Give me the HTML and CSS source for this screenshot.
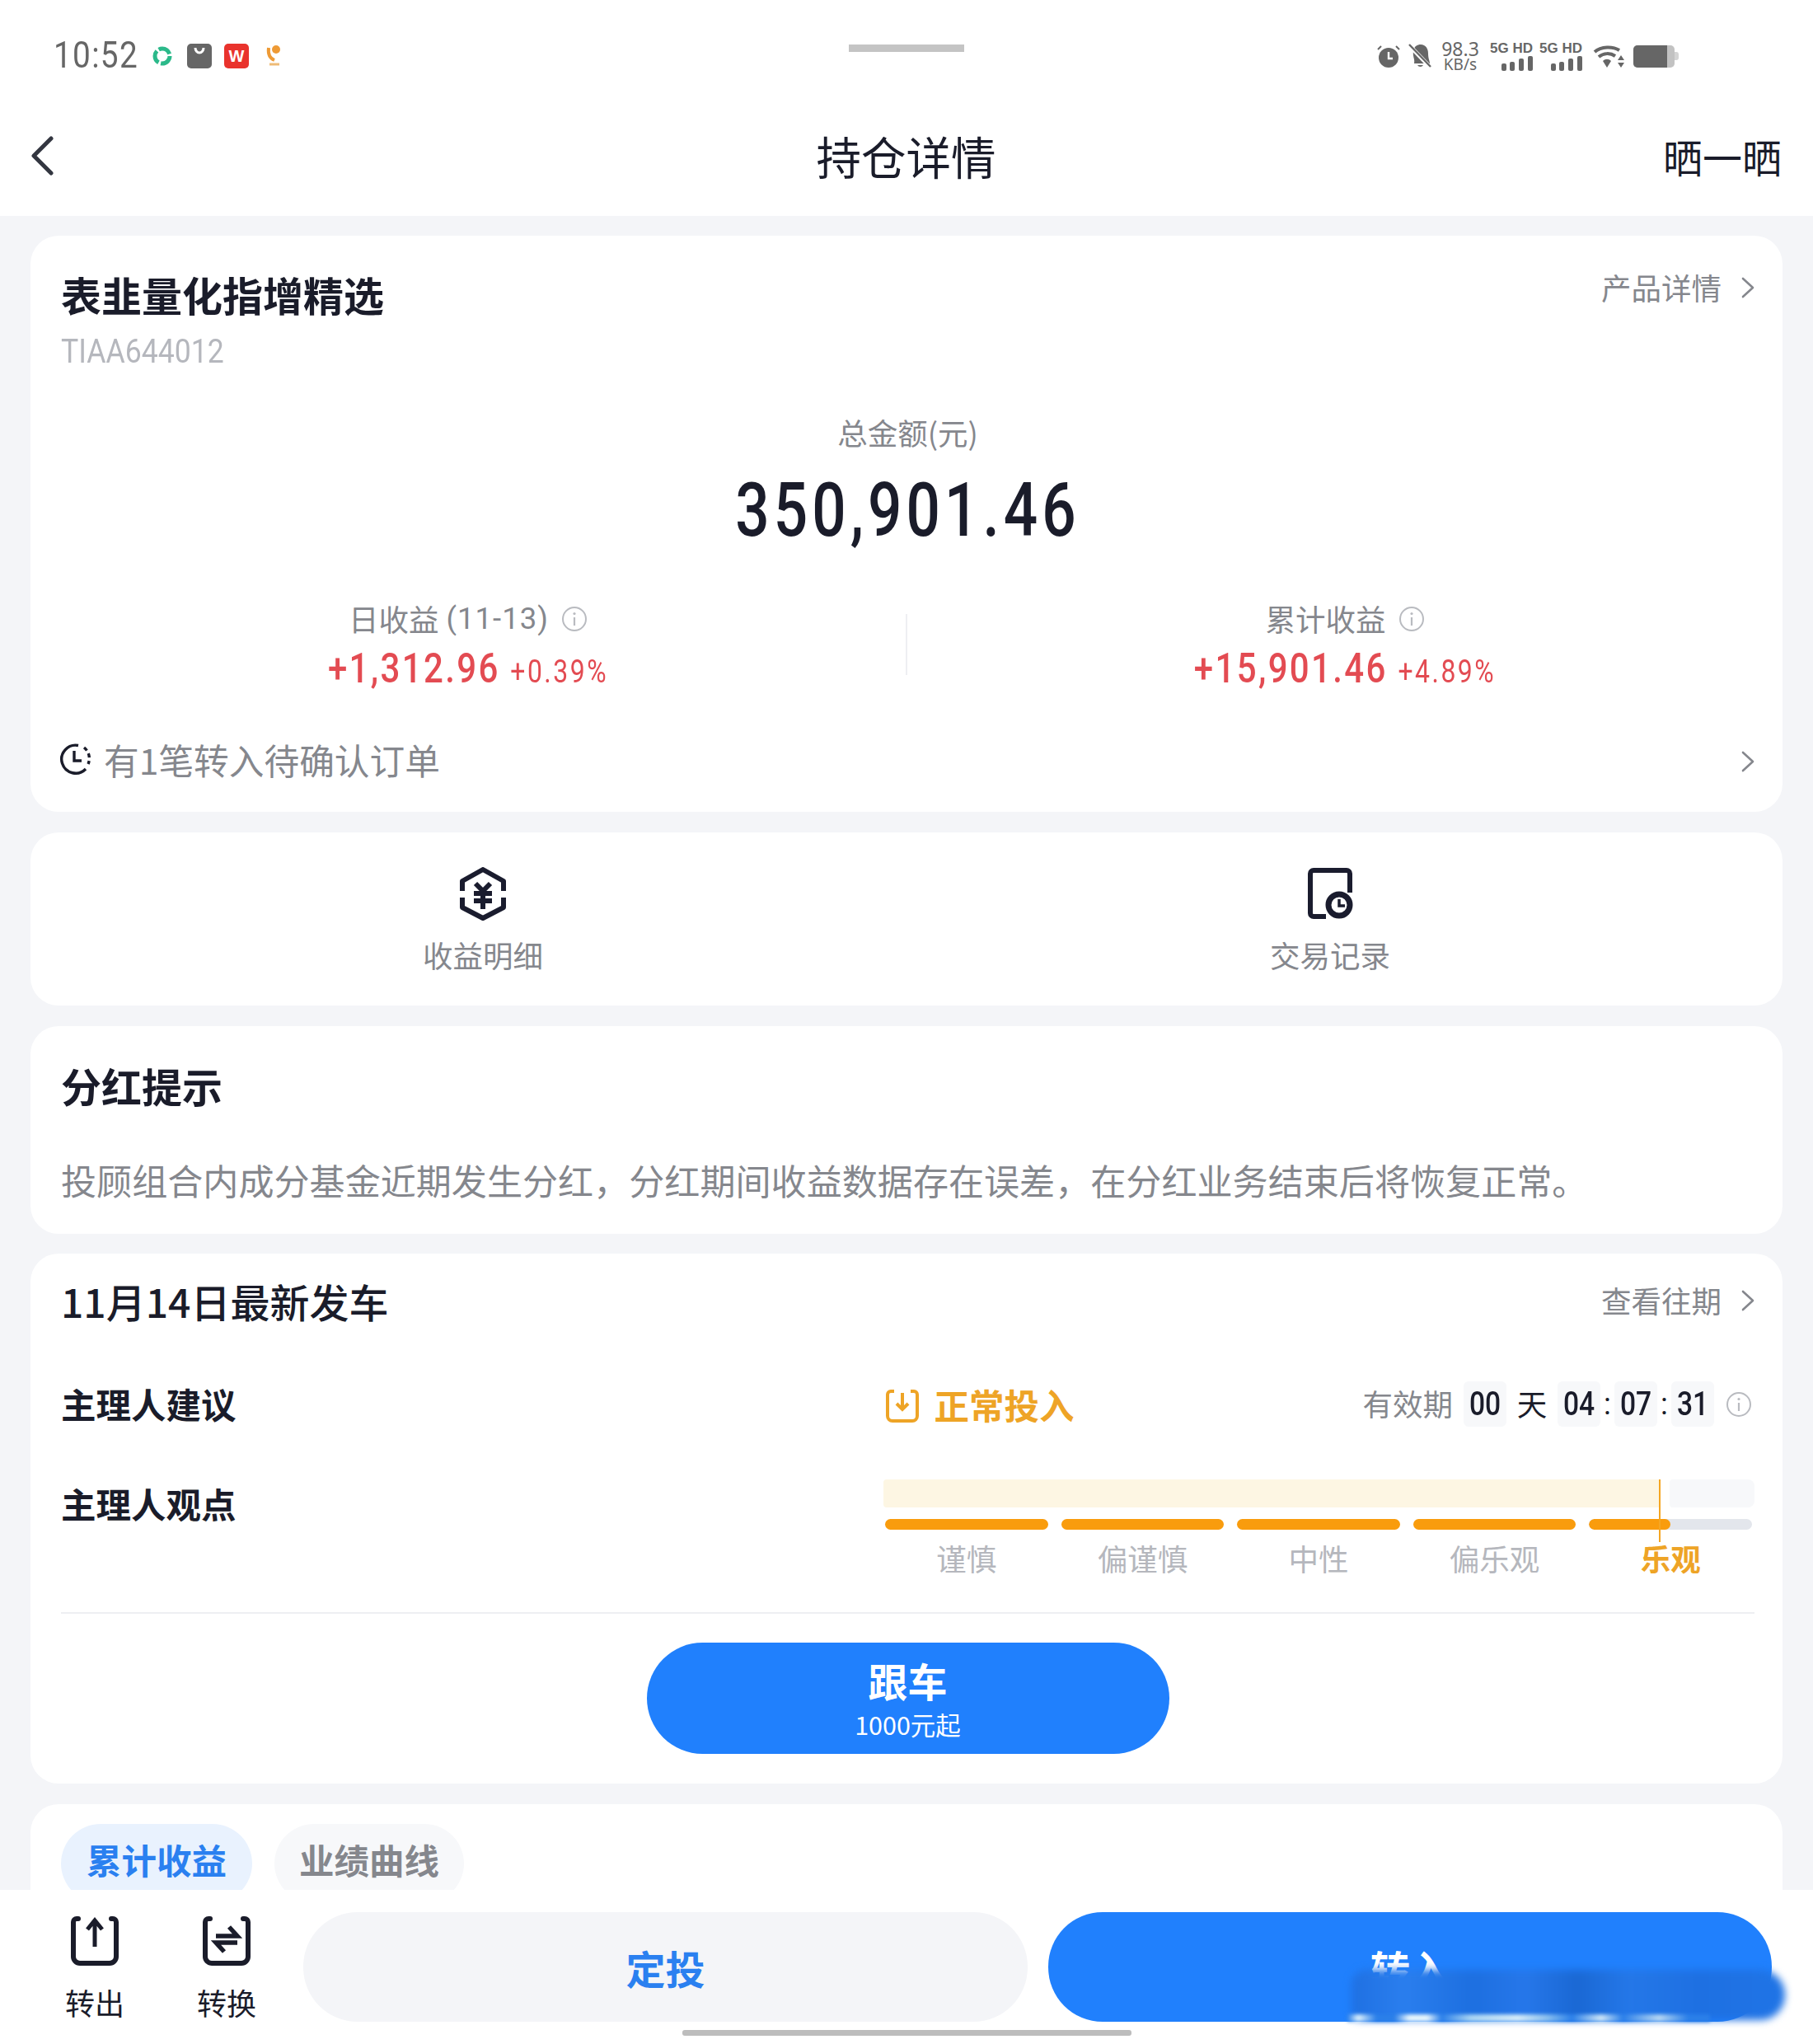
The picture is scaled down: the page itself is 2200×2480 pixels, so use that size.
FILE: index.html
```html
<!DOCTYPE html>
<html lang="zh-CN">
<head>
    <meta charset="UTF-8">
    <meta name="viewport" content="width=device-width, initial-scale=1.0">
    <title>持仓详情</title>
    <link rel="stylesheet" href="styles.css">
</head>
<body>
    <svg class="defs" width="0" height="0">
        <symbol id="chev" viewBox="0 0 18 26"><path d="M3 2L15 13L3 24" fill="none" stroke="#85878d" stroke-width="2.6" stroke-linecap="round" stroke-linejoin="round"/></symbol>
        <symbol id="info" viewBox="0 0 32 32"><circle cx="16" cy="16" r="14" fill="none" stroke="#b9bbc0" stroke-width="2"/><circle cx="16" cy="9.5" r="1.6" fill="#b9bbc0"/><path d="M16 14V24" stroke="#b9bbc0" stroke-width="2.2"/></symbol>
    </svg>

    <div id="app">
        <!-- Statusrad -->
        <div class="status">
            <div class="status-left">
                <span class="time">10:52</span>
                <svg class="ic-ring" width="24" height="24" viewBox="0 0 24 24"><circle cx="12" cy="12" r="9" fill="none" stroke="#2bb98a" stroke-width="5" stroke-dasharray="16 2.800"/></svg>
                <span class="app-ic app-dark"><svg width="30" height="30" viewBox="0 0 30 30"><path d="M10 5a5 6 0 0 0 10 0" fill="none" stroke="#fff" stroke-width="3"/></svg></span>
                <span class="app-ic app-red">W</span>
                <svg class="ic-phone" width="27" height="30" viewBox="0 0 27 30"><circle cx="16" cy="7" r="5" fill="#ee9a35"/><path d="M7 5C6 13 9 18 14 20" fill="none" stroke="#ee9a35" stroke-width="4"/><path d="M8 25h12" stroke="#eebb77" stroke-width="3"/></svg>
            </div>
            <div class="handle"></div>
            <div class="status-right">
                <svg width="28" height="28" viewBox="0 0 28 28"><circle cx="14" cy="16" r="12" fill="#666"/><path d="M14 9v8h5" fill="none" stroke="#fff" stroke-width="2.4"/><path d="M1 6L5 2M27 6L23 2" stroke="#666" stroke-width="2"/></svg>
                <svg class="ic-bell" width="28" height="30" viewBox="0 0 28 30"><path d="M7 24C8 18 5 16 6 9C7 3 11 1 15 1C21 1 24 6 24 12C24 18 26 21 26 24Z" fill="#666"/><path d="M11 26a4 4 0 0 0 7 0Z" fill="#666"/><path d="M1 2L27 29" stroke="#fff" stroke-width="5"/><path d="M1 1L27 28" stroke="#666" stroke-width="2.4"/></svg>
                <div class="speed"><span class="speed-num">98.3</span><span class="speed-unit">KB/s</span></div>
                <div class="sim">
                    <span>5G HD</span>
                    <svg width="38" height="18" viewBox="0 0 38 18"><rect x="0" y="9" width="6" height="9" rx="2"/><rect x="10" y="7" width="6" height="11" rx="2"/><rect x="21" y="3" width="6" height="15" rx="2"/><rect x="32" y="0" width="6" height="18" rx="2"/></svg>
                </div>
                <div class="sim">
                    <span>5G HD</span>
                    <svg width="38" height="18" viewBox="0 0 38 18"><rect x="0" y="9" width="6" height="9" rx="2"/><rect x="10" y="7" width="6" height="11" rx="2"/><rect x="21" y="3" width="6" height="15" rx="2"/><rect x="32" y="0" width="6" height="18" rx="2"/></svg>
                </div>
                <svg class="ic-wifi" width="38" height="30" viewBox="0 0 38 30"><path d="M2 10C10 3 24 3 32 8M7 16C13 11 21 11 27 15" fill="none" stroke="#666" stroke-width="4"/><path d="M12 21C15 18 19 18 22 21L17 29Z" fill="#666"/><path d="M34 14l4 6h-8zM30 23h8l-4 6z" fill="#666"/></svg>
                <div class="battery"><span class="battery-fill"></span></div>
                <span class="battery-nub"></span>
            </div>
        </div>

        <!-- Navigering -->
        <div class="nav">
            <svg class="nav-back" width="28" height="48" viewBox="0 0 28 48"><path d="M25 3L4 24L25 45" fill="none" stroke="#333640" stroke-width="5" stroke-linecap="round" stroke-linejoin="round"/></svg>
            <div class="nav-title">持仓详情</div>
            <div class="nav-share">晒一晒</div>
        </div>

        <div class="main">
            <!-- Översikt -->
            <section class="card card-total">
                <div class="head-row">
                    <h2 class="title">表韭量化指增精选</h2>
                    <a class="more">产品详情<svg class="chev" width="18" height="26"><use href="#chev"/></svg></a>
                </div>
                <div class="code">TIAA644012</div>
                <div class="total-label">总金额(元)</div>
                <div class="total-value">350,901.46</div>
                <div class="stats">
                    <div class="stat">
                        <div class="stat-label">日收益 <span class="num">(11-13)</span><svg class="info" width="32" height="32"><use href="#info"/></svg></div>
                        <div class="stat-value"><span class="gain">+1,312.96</span><span class="rate">+0.39%</span></div>
                    </div>
                    <div class="stat-line"></div>
                    <div class="stat">
                        <div class="stat-label">累计收益<svg class="info" width="32" height="32"><use href="#info"/></svg></div>
                        <div class="stat-value"><span class="gain">+15,901.46</span><span class="rate">+4.89%</span></div>
                    </div>
                </div>
                <div class="pending">
                    <svg class="pending-ic" width="40" height="38" viewBox="0 0 40 38"><path d="M24 2.500A17 17 0 1 0 33 31" fill="none" stroke="#1a1c2a" stroke-width="3.400"/><path d="M31 5a17 17 0 0 1 5 20" fill="none" stroke="#1a1c2a" stroke-width="3.400" stroke-dasharray="5 4"/><path d="M19 9V21H28" fill="none" stroke="#1a1c2a" stroke-width="3.400"/></svg>
                    <span class="pending-text">有1笔转入待确认订单</span>
                    <svg class="chev" width="18" height="26"><use href="#chev"/></svg>
                </div>
            </section>

            <!-- Genvägar -->
            <section class="card card-links">
                <div class="link">
                    <svg width="58" height="65" viewBox="0 0 58 65"><path d="M4 29V17L29 3L54 17V29M54 37V49L29 62L4 49V37" fill="none" stroke="#1a1c2e" stroke-width="6" stroke-linejoin="round"/><path d="M20 20L29 29L38 20M18 32H40M18 41H40M29 29V51" fill="none" stroke="#1a1c2e" stroke-width="6"/></svg>
                    <span class="link-text">收益明细</span>
                </div>
                <div class="link">
                    <svg width="56" height="63" viewBox="0 0 56 63"><path d="M23 59H8A4 4 0 0 1 4 55V7A4 4 0 0 1 8 3H48A4 4 0 0 1 52 7V30" fill="none" stroke="#1a1c2e" stroke-width="6"/><circle cx="39" cy="45" r="13" fill="none" stroke="#1a1c2e" stroke-width="7"/><path d="M39 38V46H46" fill="none" stroke="#1a1c2e" stroke-width="3.500"/></svg>
                    <span class="link-text">交易记录</span>
                </div>
            </section>

            <!-- Utdelning -->
            <section class="card card-notice">
                <h2 class="title">分红提示</h2>
                <p class="notice-text">投顾组合内成分基金近期发生分红，分红期间收益数据存在误差，在分红业务结束后将恢复正常。</p>
            </section>

            <!-- Senaste signal -->
            <section class="card card-signal">
                <div class="head-row signal-head">
                    <h3 class="signal-title">11月14日最新发车</h3>
                    <a class="more">查看往期<svg class="chev" width="18" height="26"><use href="#chev"/></svg></a>
                </div>
                <div class="signal-row">
                    <div class="row-label">主理人建议</div>
                    <div class="row-body advice">
                        <svg width="42" height="42" viewBox="0 0 42 42"><path d="M11 3H7A4 4 0 0 0 3 7V33A6 6 0 0 0 9 39H33A6 6 0 0 0 39 33V7A4 4 0 0 0 35 3H31" fill="none" stroke="#eea426" stroke-width="4"/><path d="M21 5V24M14 18L21 25L28 18" fill="none" stroke="#eea426" stroke-width="4"/></svg>
                        <span class="advice-text">正常投入</span>
                        <div class="validity">
                            <span class="validity-label">有效期</span>
                            <span class="digit digit-first"><i>00</i></span>
                            <span class="day">天</span>
                            <span class="digit"><i>04</i></span><span class="colon">:</span><span class="digit"><i>07</i></span><span class="colon">:</span><span class="digit"><i>31</i></span>
                            <svg class="info" width="32" height="32"><use href="#info"/></svg>
                        </div>
                    </div>
                </div>
                <div class="signal-row view-row">
                    <div class="row-label view-label">主理人观点</div>
                    <div class="row-body gauge">
                        <div class="gauge-bg"><span class="bg-on"></span><span class="bg-off"></span></div>
                        <div class="gauge-bars">
                            <span class="seg"></span><span class="seg"></span><span class="seg"></span><span class="seg"></span>
                            <span class="seg seg-part"><i></i></span>
                        </div>
                        <div class="gauge-labels">
                            <span>谨慎</span><span>偏谨慎</span><span>中性</span><span>偏乐观</span><span class="on">乐观</span>
                        </div>
                        <span class="gauge-mark"></span>
                    </div>
                </div>
                <div class="signal-line"></div>
                <div class="follow">
                    <strong>跟车</strong>
                    <span>1000元起</span>
                </div>
            </section>

            <!-- Flikar -->
            <section class="card card-tabs">
                <span class="tab tab-on">累计收益</span>
                <span class="tab">业绩曲线</span>
            </section>
        </div>

        <!-- Nedre knappar -->
        <div class="bottom">
            <div class="bottom-row">
                <div class="tool">
                    <svg width="60" height="61" viewBox="0 0 60 61"><path d="M10 4H8A4 4 0 0 0 4 8V50A8 8 0 0 0 12 58H48A8 8 0 0 0 56 50V8A4 4 0 0 0 52 4H50" fill="none" stroke="#1a1c2a" stroke-width="6" stroke-linecap="round"/><path d="M30 38V6M21 17L30 6L39 17" fill="none" stroke="#1a1c2a" stroke-width="5"/></svg>
                    <span>转出</span>
                </div>
                <div class="tool">
                    <svg width="60" height="61" viewBox="0 0 60 61"><path d="M10 4H8A4 4 0 0 0 4 8V50A8 8 0 0 0 12 58H48A8 8 0 0 0 56 50V8A4 4 0 0 0 52 4H50" fill="none" stroke="#1a1c2a" stroke-width="6" stroke-linecap="round"/><path d="M17 25H43L33 14M43 33H17L27 44" fill="none" stroke="#1a1c2a" stroke-width="5.500"/></svg>
                    <span>转换</span>
                </div>
                <button class="btn btn-soft">定投</button>
                <button class="btn btn-main">转入</button>
            </div>
            <div class="home-bar"></div>
            <div class="smear"></div>
            <div class="smear-edge"></div>
        </div>
    </div>
</body>
</html>
```

FILE: styles.css
```css
* {
    box-sizing: border-box;
}

body {
    margin: 0;
    font-family: "Noto Sans CJK SC", "Noto Sans", sans-serif;
    color: #1a1c2a;
    background-color: #f4f5f8;
}

.defs {
    position: absolute;
}

#app {
    width: 2200px;
    height: 2480px;
    display: flex;
    flex-direction: column;
    overflow: hidden;
}

/* statusrad */
.status {
    height: 115px;
    padding: 50px 65px 0;
    background-color: #fff;
    display: grid;
    grid-template-columns: 1fr 140px 1fr;
    align-items: start;
}

.status-left, .status-right {
    height: 36px;
    display: flex;
    align-items: center;
}

.time {
    font-family: Roboto, sans-serif;
    font-size: 44px;
    letter-spacing: 1.5px;
    color: #666;
    width: 100px;
    margin-top: -3px;
    transform: scaleX(0.88);
    transform-origin: left center;
}

.ic-ring {
    margin-left: 20px;
}

.app-ic {
    width: 30px;
    height: 30px;
    border-radius: 5px;
    display: flex;
    align-items: center;
    justify-content: center;
}

.app-dark {
    margin-left: 18px;
    background-color: #666;
}

.app-red {
    margin-left: 15px;
    background-color: #e9332d;
    color: #fff;
    font: bold 20px "Liberation Sans", sans-serif;
}

.ic-phone {
    margin-left: 17px;
}

.handle {
    height: 9px;
    margin-top: 4px;
    background-color: #c4c4c4;
}

.status-right {
    justify-content: flex-end;
    padding-right: 98px;
}

.ic-bell {
    margin-left: 10px;
}

.speed {
    margin-left: 11px;
    width: 48px;
    display: flex;
    flex-direction: column;
    align-items: center;
    font-family: "Noto Sans", sans-serif;
    color: #666;
}

.speed-num {
    font-size: 23px;
    line-height: 20px;
}

.speed-unit {
    font-size: 19px;
    line-height: 18px;
}

.sim {
    margin-left: 13px;
    width: 51px;
    display: flex;
    flex-direction: column;
    align-items: flex-end;
    color: #666;
    font: bold 17px/18px "Liberation Sans", sans-serif;
    white-space: nowrap;
}

.sim + .sim {
    margin-left: 9px;
}

.sim svg {
    fill: #666;
}

.ic-wifi {
    margin-left: 13px;
}

.battery {
    margin-left: 11px;
    width: 50px;
    height: 27px;
    border-radius: 5px;
    overflow: hidden;
    background-color: #c2c2c2;
}

.battery-fill {
    display: block;
    width: 41px;
    height: 27px;
    background-color: #666;
}

.battery-nub {
    width: 5px;
    height: 10px;
    border-radius: 0 3px 3px 0;
    background-color: #d4d4d4;
}

/* navigering */
.nav {
    height: 147px;
    padding: 0 38px 0 37px;
    background-color: #fff;
    display: grid;
    grid-template-columns: 1fr auto 1fr;
    align-items: center;
}

.nav-title {
    font-size: 54.5px;
    line-height: 60px;
}

.nav-share {
    justify-self: end;
    font-size: 48px;
    line-height: 60px;
}

/* kort */
.main {
    flex: 1;
    min-height: 0;
    padding: 24px 37px 0;
    overflow: hidden;
    display: flex;
    flex-direction: column;
    gap: 25px;
}

.card {
    flex-shrink: 0;
    background-color: #fff;
    border-radius: 34px;
    padding: 0 34px 0 37px;
}

.head-row {
    display: flex;
    justify-content: space-between;
}

.title {
    margin: 0;
    font-size: 49px;
    line-height: 48px;
    font-weight: 700;
}

.more {
    display: flex;
    align-items: center;
    font-size: 36.5px;
    line-height: 48px;
    color: #85878d;
}

.more .chev {
    margin-left: 23px;
    margin-right: -1px;
}

.card-total {
    height: 699px;
    padding-top: 47px;
}

.card-total .more {
    margin-top: -8px;
    height: 48px;
}

.code {
    margin-top: 26px;
    font-family: Roboto, sans-serif;
    font-size: 40px;
    line-height: 40px;
    color: #b5b7bd;
    transform: scaleX(0.89);
    transform-origin: left center;
}

.total-label {
    margin-top: 58px;
    text-align: center;
    font-size: 36.5px;
    line-height: 40px;
    color: #85878d;
}

.total-value {
    margin-top: 25px;
    text-align: center;
    font-family: Roboto, sans-serif;
    font-weight: 500;
    font-size: 90px;
    line-height: 100px;
    letter-spacing: 6.2px;
    transform: scaleX(0.81);
}

.stats {
    margin: 61px -34px 0 -37px;
    display: flex;
    align-items: center;
}

.stat {
    flex: 1;
    text-align: center;
}

.stat-line {
    width: 2px;
    height: 74px;
    background-color: #eeeff2;
    margin-top: -8px;
}

.stat-label {
    display: flex;
    justify-content: center;
    align-items: center;
    font-size: 36.5px;
    line-height: 40px;
    color: #85878d;
}

.num {
    font-family: Roboto, sans-serif;
    margin-left: 9px;
    letter-spacing: 1px;
}

.info {
    margin-left: 15px;
}

.stat-value {
    margin-top: 15px;
    line-height: 50px;
    font-family: Roboto, sans-serif;
    color: #e34b52;
    display: flex;
    justify-content: center;
    align-items: baseline;
    transform: scaleX(0.84);
}

.gain {
    font-size: 50px;
    font-weight: 500;
    letter-spacing: 2.8px;
}

.rate {
    margin-left: 15px;
    font-size: 38px;
    letter-spacing: 3px;
}

.pending {
    margin-top: 56px;
    display: flex;
    align-items: center;
    margin-right: -1px;
}

.pending-ic {
    margin-left: -3px;
}

.pending .chev {
    margin-top: 6px;
}

.pending-text {
    flex: 1;
    margin-left: 15px;
    font-size: 42.7px;
    line-height: 50px;
    color: #85878d;
}

.card-links {
    padding: 42px 35px 41px;
    display: flex;
}

.link {
    flex: 1;
    display: flex;
    flex-direction: column;
    align-items: center;
}

.link svg {
    height: 65px;
}

.link-text {
    margin-top: 22px;
    font-size: 36.5px;
    line-height: 40px;
    color: #85878d;
}

.card-notice {
    padding-top: 48px;
    padding-bottom: 41px;
}

.notice-text {
    margin: 65px 0 0;
    font-size: 43.08px;
    line-height: 50px;
    color: #85878d;
    white-space: nowrap;
}

.card-signal {
    padding-top: 32px;
    padding-bottom: 36px;
    margin-top: -1px;
}

.signal-head {
    align-items: center;
}

.signal-title {
    margin: 0;
    font-size: 48px;
    line-height: 50px;
    font-weight: 500;
}

.signal-row {
    display: flex;
    margin-top: 73px;
}

.view-row {
    margin-top: 59px;
}

.row-label {
    width: 999px;
    font-size: 42.5px;
    line-height: 54px;
    font-weight: 700;
}

.view-label {
    line-height: 50px;
    margin-top: 4px;
}

.row-body {
    width: 1057px;
}

.advice {
    display: flex;
    align-items: center;
    height: 60px;
    padding-left: 1px;
}

.advice-text {
    margin-left: 18px;
    font-size: 42.5px;
    font-weight: 700;
    color: #eea426;
    margin-top: -5px;
}

.validity {
    margin-left: auto;
    display: flex;
    align-items: center;
    font-size: 36.5px;
    color: #85878d;
    height: 55px;
    margin-top: -5px;
}

.validity-label {
    margin-top: -3px;
}

.digit {
    width: 52px;
    height: 55px;
    border-radius: 6px;
    background-color: #f7f8fa;
    text-align: center;
    font-family: Roboto, sans-serif;
    line-height: 55px;
    color: #1a1c2a;
}

.digit i {
    display: block;
    font-style: normal;
    font-weight: 500;
    font-size: 40px;
    transform: scaleX(0.84);
}

.digit-first {
    margin-left: 13px;
}

.day {
    width: 62px;
    text-align: center;
    color: #1a1c2a;
    margin-top: -3px;
}

.colon {
    width: 17px;
    text-align: center;
    font-family: Roboto, sans-serif;
    color: #1a1c2a;
}

.validity .info {
    margin-left: 14px;
    margin-right: 3px;
}

.gauge {
    position: relative;
}

.gauge-bg {
    display: flex;
    height: 34px;
}

.bg-on {
    width: 942px;
    background-color: #fdf6e3;
    border-radius: 4px 0 0 4px;
}

.bg-off {
    width: 103px;
    margin-left: 12px;
    background-color: #f7f8fa;
    border-radius: 4px 8px 8px 4px;
}

.gauge-bars {
    margin: 14px 3px 0 2px;
    display: grid;
    grid-template-columns: repeat(5, 1fr);
    gap: 16px;
}

.seg {
    height: 13px;
    border-radius: 7px;
    background-color: #f99c0d;
    overflow: hidden;
}

.seg-part {
    background-color: #e3e6ec;
}

.seg-part i {
    display: block;
    width: 50%;
    height: 13px;
    border-radius: 7px;
    background-color: #f99c0d;
}

.gauge-labels {
    margin: 15px 3px 0 2px;
    display: grid;
    grid-template-columns: repeat(5, 1fr);
    gap: 16px;
    font-size: 36.5px;
    line-height: 40px;
    color: #b5b7bd;
    text-align: center;
}

.gauge-labels .on {
    color: #eea426;
    font-weight: 700;
}

.gauge-mark {
    position: absolute;
    left: 941px;
    top: 0;
    width: 2px;
    height: 76px;
    background-color: #f5a623;
}

.signal-line {
    margin-top: 45px;
    height: 2px;
    background-color: #eeeff2;
}

.follow {
    margin: 35px auto 0;
    width: 634px;
    height: 135px;
    border-radius: 68px;
    background-color: #2080fd;
    color: #fff;
    display: flex;
    flex-direction: column;
    align-items: center;
    padding-top: 19px;
}

.follow strong {
    font-size: 48px;
    line-height: 52px;
}

.follow span {
    margin-top: 9px;
    font-size: 30.5px;
    line-height: 38px;
}

.card-tabs {
    height: 200px;
    padding-top: 24px;
    display: flex;
    align-items: flex-start;
    gap: 27px;
}

.tab {
    height: 96px;
    padding: 0 30px;
    border-radius: 48px;
    background-color: #f7f8fa;
    font-size: 42.5px;
    line-height: 86px;
    font-weight: 700;
    color: #85878d;
}

.tab-on {
    padding: 0 31px;
    background-color: #e9f2fe;
    color: #2a80f0;
}

/* nedre knappar */
.bottom {
    position: relative;
    height: 187px;
    padding-top: 27px;
    background-color: #fff;
}

.bottom-row {
    display: flex;
    align-items: flex-start;
    padding-left: 80px;
}

.tool {
    width: 70px;
    margin-top: 4px;
    margin-right: 90px;
    display: flex;
    flex-direction: column;
    align-items: center;
    font-size: 36px;
    line-height: 40px;
    white-space: nowrap;
}

.tool + .tool {
    margin-right: 58px;
}

.tool span {
    margin-top: 24px;
}

.btn {
    height: 133px;
    border: none;
    padding: 0;
    border-radius: 66px;
    font-family: inherit;
    font-size: 48px;
    font-weight: 700;
}

.btn-soft {
    width: 879px;
    background-color: #f4f5f8;
    color: #2a80f0;
}

.btn-main {
    width: 878px;
    margin-left: 25px;
    background-color: #2080fd;
    color: #fff;
}

.home-bar {
    width: 545px;
    height: 7px;
    margin: 10px auto 0;
    border-radius: 3px;
    background-color: #bdbdbd;
}

/* utsmetat parti ovanpå knappen */
.smear {
    position: absolute;
    left: 1640px;
    top: 97px;
    width: 526px;
    height: 61px;
    border-radius: 18px 30px 30px 10px;
    background: linear-gradient(90deg, #1f70e2 0, #2a7eee 12%, #1d6fe0 28%, #2677ea 40%, #1a68d4 52%, #2477e8 64%, #1e70e2 80%, #1f74e6 100%);
    filter: blur(5px);
}

.smear-edge {
    position: absolute;
    left: 1635px;
    top: 151px;
    width: 440px;
    height: 9px;
    background: linear-gradient(90deg, #2b7fe8 0, #dff2fb 3%, #2b7fe8 8%, #2b7fe8 13%, #e8f6fc 17%, #e8f6fc 22%, #2b7fe8 26%, #a9d4f2 34%, #d6ecf8 47%, #8cc0ee 55%, #2b7fe8 62%, #cfe6f6 70%, #2b7fe8 76%, #b7d7f2 86%, #2b7fe8 94%);
    filter: blur(2px);
}
```
